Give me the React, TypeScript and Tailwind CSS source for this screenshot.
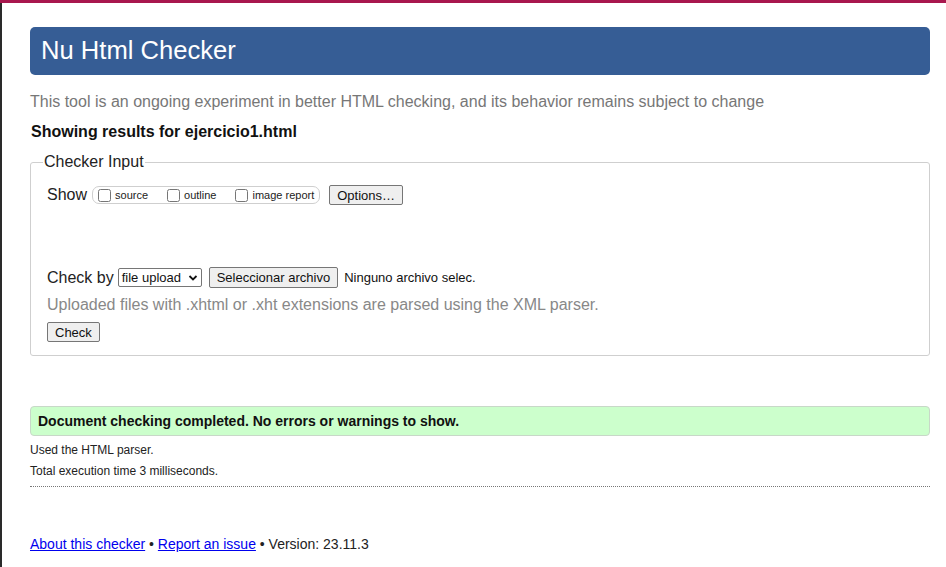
export default function App() {
  return (
    <div className="min-h-[567px] bg-white" style={{ fontFamily: "'Liberation Sans', Arial, sans-serif" }}>
      {/* top accent */}
      <div className="h-[3px] bg-[#a8174e]"></div>

      <div className="min-h-[564px] border-l-2 border-[#2a2a2a] pt-[24px] pl-[28px] pr-[16px] pb-[10px]">
        {/* Title bar */}
        <div className="h-[48px] rounded-[5px] bg-[#365d95] flex items-center pl-[11px]">
          <h1 className="text-[25.6px] text-white leading-none">Nu Html Checker</h1>
        </div>

        <p className="mt-[18px] text-[16px] leading-[18px] text-[#777]">
          This tool is an ongoing experiment in better HTML checking, and its behavior remains subject to change
        </p>

        <p className="mt-[12px] text-[16px] leading-[18px] font-bold text-[#111] pl-[1px]">
          Showing results for ejercicio1.html
        </p>

        {/* Checker input */}
        <fieldset className="mt-[12px] border border-[#cfcfcf] rounded-[3px] pl-[16px] pr-[16px] pb-[11px]">
          <legend className="-ml-[4px] px-[1px] text-[16px] leading-[18px] text-[#222]">Checker Input</legend>

          <div className="mt-[14px] flex items-center h-[20px]">
            <span className="text-[16px] text-[#222] mr-[5px]">Show</span>
            <div className="flex items-center h-[18px] border border-[#cfcfcf] rounded-[7px] pl-[5px] pr-[5px] text-[11px] text-[#222]">
              <label className="flex items-center mr-[19px]">
                <input type="checkbox" className="m-0 mr-[4px] w-[13px] h-[13px]" />
                source
              </label>
              <label className="flex items-center mr-[19px]">
                <input type="checkbox" className="m-0 mr-[4px] w-[13px] h-[13px]" />
                outline
              </label>
              <label className="flex items-center">
                <input type="checkbox" className="m-0 mr-[4px] w-[13px] h-[13px]" />
                image report
              </label>
            </div>
            <button className="ml-[9px] h-[20px] px-[7px] text-[13px] text-[#111] bg-[#efefef] border border-[#767676] rounded-[2px]">
              Options…
            </button>
          </div>

          <div className="mt-[62px] flex items-center h-[21px]">
            <span className="text-[16px] text-[#222] mr-[4px]">Check by</span>
            <div className="flex items-center h-[19px] w-[84px] border border-[#767676] rounded-[2px] pl-[3px] pr-[3px] text-[13px] text-[#111] justify-between">
              <span>file upload</span>
              <svg width="10" height="10" viewBox="0 0 10 10">
                <path d="M1.5 3 L5 6.5 L8.5 3" fill="none" stroke="#111" strokeWidth="1.8" />
              </svg>
            </div>
            <button className="ml-[7px] h-[21px] px-[7px] text-[13px] text-[#111] bg-[#efefef] border border-[#767676] rounded-[2px]">
              Seleccionar archivo
            </button>
            <span className="ml-[6px] text-[13px] text-[#111]">Ninguno archivo selec.</span>
          </div>

          <p className="mt-[8px] text-[16px] leading-[18px] text-[#888]">
            Uploaded files with .xhtml or .xht extensions are parsed using the XML parser.
          </p>

          <button className="mt-[8px] h-[20px] px-[7px] text-[13px] text-[#111] bg-[#efefef] border border-[#767676] rounded-[2px]">
            Check
          </button>
        </fieldset>

        {/* Result */}
        <div className="mt-[50px] h-[30px] flex items-center pl-[7px] bg-[#ccffcc] border border-[#c8d8c8] rounded-[4px]">
          <p className="text-[14px] font-bold text-[#111]">Document checking completed. No errors or warnings to show.</p>
        </div>

        <p className="mt-[7px] text-[12px] leading-[15px] text-[#222]">Used the HTML parser.</p>
        <p className="mt-[6px] text-[12px] leading-[15px] text-[#222]">Total execution time 3 milliseconds.</p>
        <div className="mt-[7px] border-b border-dotted border-[#777]"></div>

        <p className="mt-[49px] text-[14px] leading-[17px] text-[#222]">
          <a href="#" className="text-[#0000ee] underline">About this checker</a>
          {" • "}
          <a href="#" className="text-[#0000ee] underline">Report an issue</a>
          {" • Version: 23.11.3"}
        </p>
      </div>
    </div>
  )
}
